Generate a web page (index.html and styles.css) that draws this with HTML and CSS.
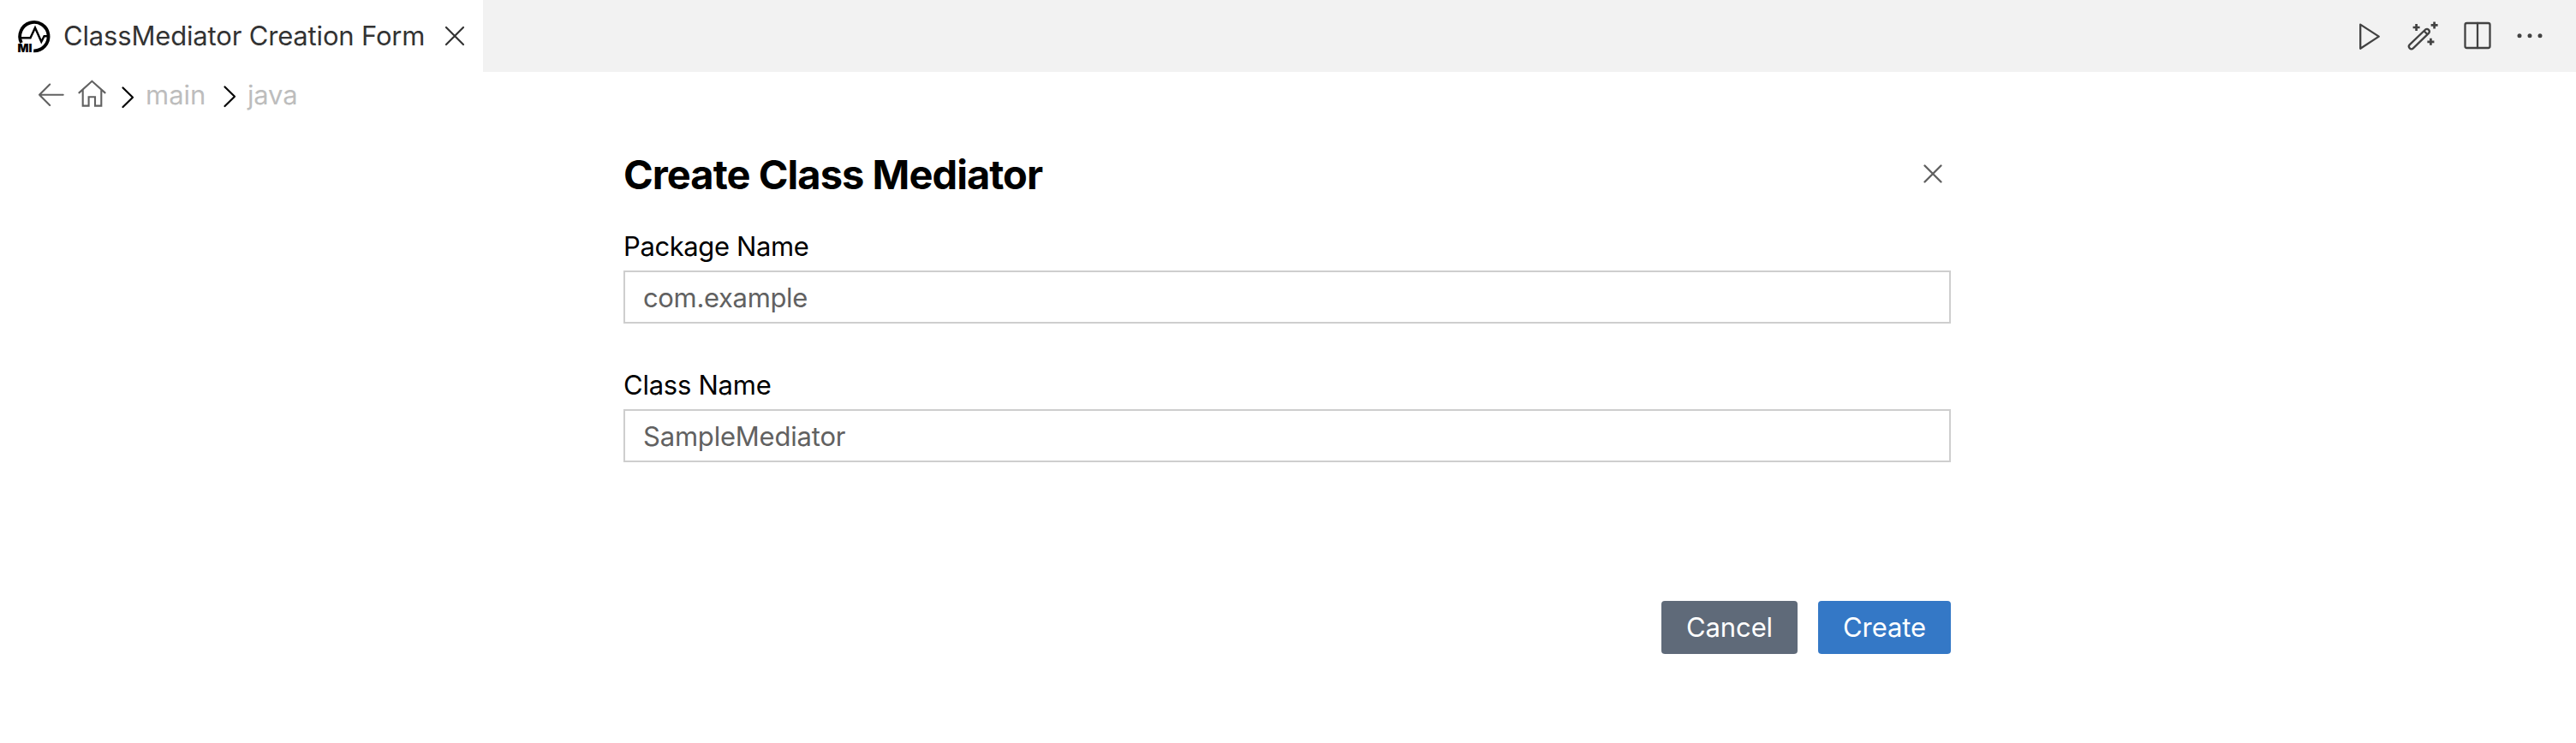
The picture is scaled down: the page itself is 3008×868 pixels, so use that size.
FILE: index.html
```html
<!DOCTYPE html>
<html lang="en">
<head>
<meta charset="utf-8">
<title>ClassMediator Creation Form</title>
<link rel="stylesheet" href="styles.css">
</head>
<body>
<header class="tabbar">
  <div class="tab">
    <svg class="tab-logo" viewBox="20 22 40 40">
      <path class="logo-ring" d="M24.9 50 A16.7 16.7 0 1 1 39.2 59.3"/>
      <path class="logo-wave" d="M25 44.3H35.5L41 32.5L48.3 48.7L51.6 42.3H57"/>
      <text class="logo-text" x="20.6" y="60.8" textLength="17" lengthAdjust="spacingAndGlyphs">MI</text>
    </svg>
    <span class="tab-title">ClassMediator Creation Form</span>
    <svg class="tab-close" viewBox="0 0 22 22"><path d="M1 1L21 21M21 1L1 21"/></svg>
  </div>
  <div class="actions">
    <svg class="action" viewBox="2750 26 32 32"><path d="M2756.2 28.6L2777.8 42.6L2756.2 56.7Z"/></svg>
    <svg class="action wide" viewBox="2810 22 38 38">
      <path class="wand" d="M2832.2 33.5L2813.8 51.2A2.9 2.9 0 0 0 2817.9 55.4L2836.2 37.6A2.9 2.9 0 0 0 2832.2 33.5ZM2830.6 35.2L2834.6 39.2"/>
      <path class="spark" d="M2821.6 27V35M2817.6 31H2825.6M2842.6 24.4V32.4M2838.6 28.4H2846.6M2838.4 43.8V51.8M2834.4 47.8H2842.4"/>
    </svg>
    <svg class="action" viewBox="2877 25 32 32"><rect x="2878.5" y="26" width="29" height="29" rx="2"/><path d="M2893 26V55"/></svg>
    <svg class="action" viewBox="2938 26 32 32"><g class="dots"><circle cx="2942" cy="41.8" r="2.5"/><circle cx="2954" cy="41.8" r="2.5"/><circle cx="2966" cy="41.8" r="2.5"/></g></svg>
  </div>
</header>
<nav class="crumbs">
  <svg class="crumb-icon back" viewBox="44 95 32 32"><path d="M73.7 110.8H46M58.2 98.5L46 110.8L58.2 123"/></svg>
  <svg class="crumb-icon home" viewBox="91 93 33 33"><path d="M92.4 108.4L107.4 94.8L122.6 108.4M96.7 105V123.6H103.6V113.3H111V123.6H118.3V105"/></svg>
  <svg class="chevron first" viewBox="142 101 16 26"><path d="M143.5 102.5L155 113.8L143.5 125"/></svg>
  <span class="crumb main">main</span>
  <svg class="chevron second" viewBox="261 100 16 26"><path d="M262.5 101.5L274 112.8L262.5 124"/></svg>
  <span class="crumb java">java</span>
</nav>
<main class="form">
  <div class="form-head">
    <h1 class="form-title">Create Class Mediator</h1>
    <svg class="form-close" viewBox="0 0 22 22"><path d="M1.5 1.5L20.5 20.5M20.5 1.5L1.5 20.5"/></svg>
  </div>
  <div class="field">
    <label class="label package" for="package">Package Name</label>
    <input class="input package-input" id="package" placeholder="com.example">
  </div>
  <div class="field">
    <label class="label class" for="class">Class Name</label>
    <input class="input class-input" id="class" placeholder="SampleMediator">
  </div>
  <div class="buttons">
    <button class="btn cancel">Cancel</button>
    <button class="btn create">Create</button>
  </div>
</main>
</body>
</html>
```
FILE: styles.css
```css
* { box-sizing: border-box; }
body {
  margin: 0;
  height: 868px;
  overflow: hidden;
  background: #fff;
  color: #000;
  font: 440 31px/38px Inter, "Liberation Sans", sans-serif;
}
svg { display: block; flex: none; overflow: visible; fill: none; stroke-linecap: round; stroke-linejoin: round; }
.tabbar { display: flex; justify-content: space-between; height: 84px; background: #f2f2f2; }
.tab { display: flex; align-items: center; width: 564px; padding-left: 20px; background: #fff; color: #333; }
.tab-logo { width: 40px; height: 40px; stroke: #000; }
.logo-ring { stroke-width: 3.8; stroke-linecap: butt; }
.logo-wave { stroke-width: 2.4; stroke-linejoin: miter; }
.logo-text { font: 900 13px/13px Inter, sans-serif; fill: #000; stroke: none; }
.tab-title { width: 428px; margin-left: 14px; white-space: nowrap; letter-spacing: -0.17px; }
.tab-close { width: 22px; height: 22px; margin-left: 18px; stroke: #333; stroke-width: 2.2; }
.actions { display: flex; align-items: center; padding-right: 38px; }
.action { width: 32px; height: 32px; stroke: #424242; stroke-width: 2.3; }
.action + .action { margin-left: 29px; }
.action.wide { width: 38px; height: 38px; margin-left: 28px; }
.wand { stroke-width: 2.3; }
.spark { stroke-width: 2.7; stroke-linecap: butt; }
.dots { fill: #424242; stroke: none; }
.crumbs { display: flex; align-items: flex-start; height: 92px; padding: 8px 0 0 44px; color: #bdbdbd; }
.crumb-icon { stroke: #616161; stroke-width: 2.1; }
.back { width: 32px; height: 32px; margin-top: 3px; }
.home { width: 33px; height: 33px; margin: 1px 0 0 15px; stroke-linejoin: miter; }
.chevron { width: 16px; height: 26px; stroke: #000; stroke-width: 2.2; }
.first { margin: 9px 0 0 18px; }
.crumb { white-space: nowrap; }
.main { width: 91px; margin-left: 12px; }
.second { margin: 8px 0 0 0; }
.java { margin-left: 12px; letter-spacing: -0.2px; }
.form { width: 1550px; margin-left: 728px; }
.form-head { display: flex; justify-content: space-between; align-items: flex-start; height: 93px; }
.form-title { margin: 0; font-size: 47px; line-height: 56px; font-weight: 700; letter-spacing: -0.95px; }
.form-close { width: 22px; height: 22px; margin: 16px 10px 0 0; stroke: #616161; stroke-width: 2.4; }
.field { display: flex; flex-direction: column; gap: 9px; margin-bottom: 53px; }
.label { letter-spacing: -0.4px; }
.label.class { letter-spacing: -0.25px; }
.input {
  height: 62px;
  padding: 0 21px;
  border: 2px solid #cecece;
  border-radius: 0;
  background: #fff;
  font: inherit;
}
.input::placeholder { color: #616161; opacity: 1; }
.package-input { letter-spacing: -0.35px; }
.class-input { letter-spacing: -0.2px; }
.buttons { display: flex; justify-content: flex-end; gap: 24px; padding-top: 109px; }
.btn { height: 62px; padding: 0; border: 0; border-radius: 4px; color: #fff; font: inherit; letter-spacing: -0.1px; }
.cancel { width: 159px; background: #5f6a79; }
.create { width: 155px; background: #3478c6; }
```
